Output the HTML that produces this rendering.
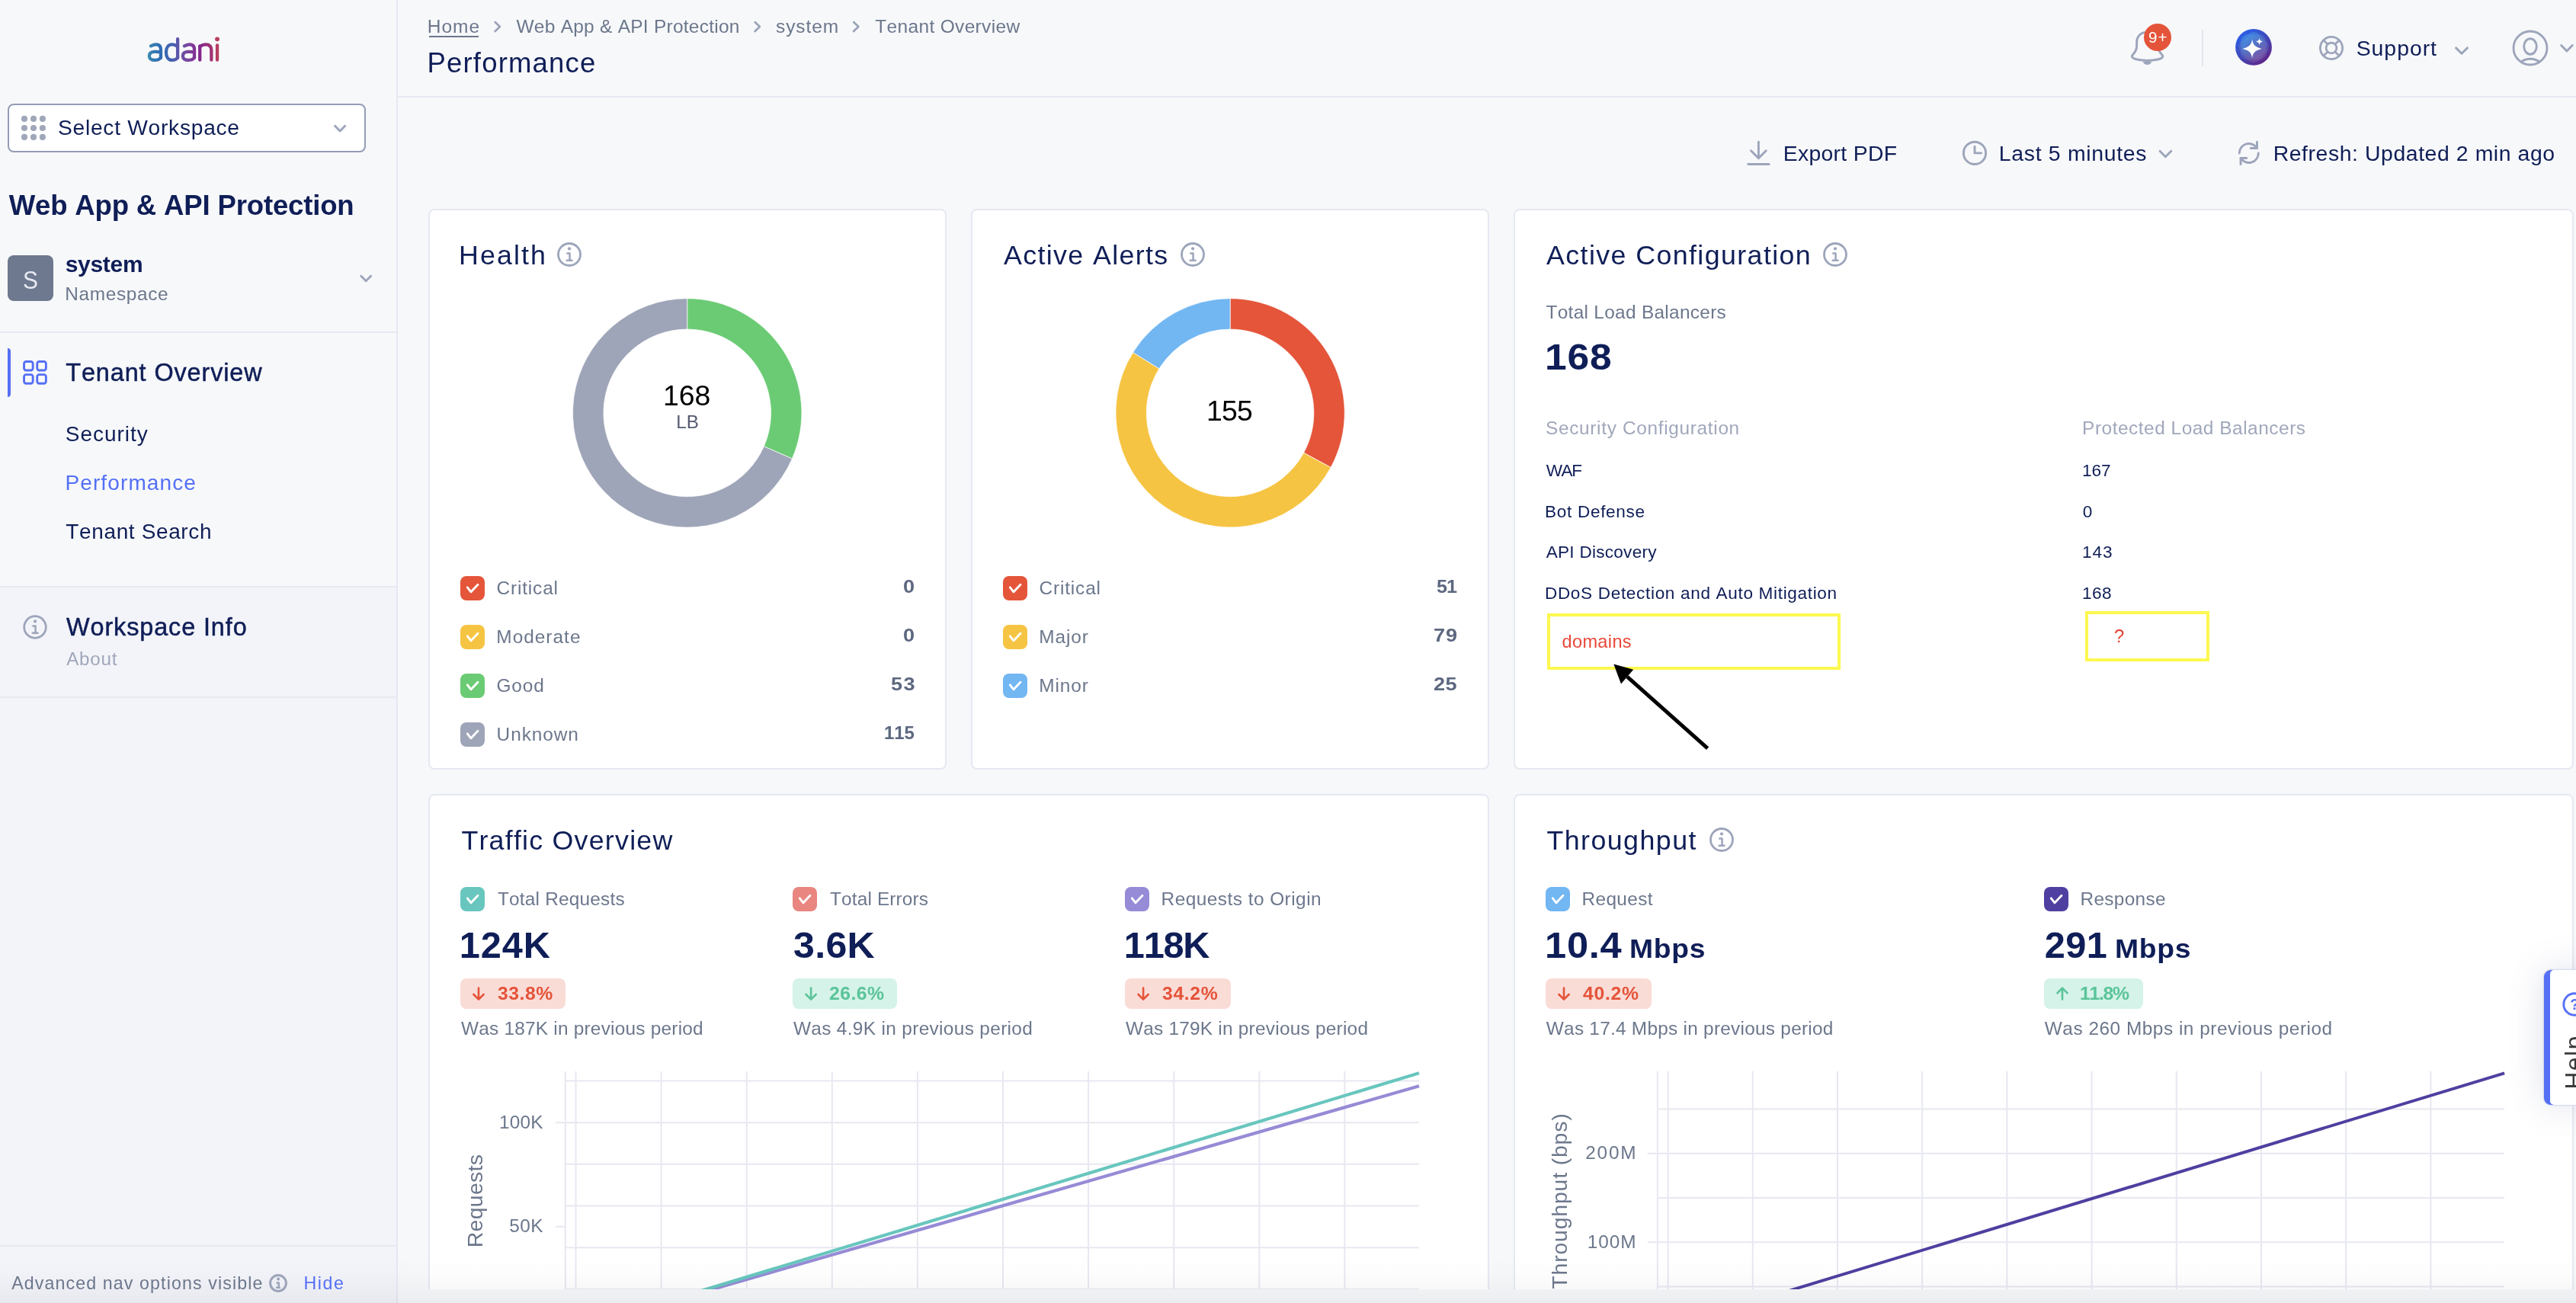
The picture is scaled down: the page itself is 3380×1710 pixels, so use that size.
<!DOCTYPE html>
<html><head><meta charset="utf-8"><title>Performance</title>
<style>
html,body{margin:0;padding:0;}
body{width:3380px;height:1710px;overflow:hidden;background:#f7f8fa;position:relative;font-family:"Liberation Sans",sans-serif;}
.t{position:absolute;white-space:nowrap;line-height:1;display:block;font-kerning:none;}
.abs{position:absolute;}
.card{position:absolute;background:#fff;border:2px solid #e6e8f2;border-radius:8px;box-sizing:border-box;}
svg{position:absolute;overflow:visible;}
.cb{position:absolute;width:32px;height:32px;border-radius:8px;}
.badge{position:absolute;height:40px;border-radius:8px;}
</style></head><body><div id="root" style="position:absolute;left:0;top:0;width:3380px;height:1710px;will-change:transform;overflow:hidden">
<div class="abs" style="left:0;top:770px;width:520px;height:940px;background:#f3f4f9"></div>
<div class="abs" style="left:520px;top:0;width:2px;height:1710px;background:#e6e8f2"></div>
<div class="abs" style="left:0;top:435px;width:520px;height:2px;background:#e6e8f2"></div>
<div class="abs" style="left:0;top:769px;width:520px;height:2px;background:#e6e8f2"></div>
<div class="abs" style="left:0;top:914px;width:520px;height:2px;background:#e6e8f2"></div>
<div class="abs" style="left:0;top:1634px;width:520px;height:2px;background:#e6e8f2"></div>
<svg style="left:180px;top:40px" width="120" height="50" viewBox="0 0 2576 1073">
<defs><linearGradient id="lg" gradientUnits="userSpaceOnUse" x1="300" y1="0" x2="2300" y2="0"><stop offset="0" stop-color="#3a8aae"/><stop offset="0.17" stop-color="#2f6cb5"/><stop offset="0.36" stop-color="#4a60b0"/><stop offset="0.43" stop-color="#5e55a8"/><stop offset="0.58" stop-color="#7c429e"/><stop offset="0.73" stop-color="#84268e"/><stop offset="0.89" stop-color="#a03372"/><stop offset="1" stop-color="#bb405a"/></linearGradient></defs>
<g fill="none" stroke="url(#lg)" stroke-width="92" stroke-linecap="round" stroke-linejoin="round">
<path d="M385 437 C430 415 480 395 530 395 C620 395 665 450 665 540 L665 770"/>
<path d="M665 608 C600 600 540 598 480 600 C390 605 340 650 340 718 C340 790 400 835 490 835 C570 835 640 810 665 760"/>
<path d="M1140 237 L1140 770"/>
<path d="M1140 455 C1090 415 1040 395 980 395 C880 395 815 480 815 615 C815 750 880 835 980 835 C1060 835 1120 805 1140 760"/>
<path d="M1330 437 C1375 415 1425 395 1475 395 C1565 395 1610 450 1610 540 L1610 770"/>
<path d="M1610 608 C1545 600 1485 598 1425 600 C1335 605 1285 650 1285 718 C1285 790 1345 835 1435 835 C1515 835 1585 810 1610 760"/>
<path d="M1765 440 L1765 830"/>
<path d="M1765 455 C1820 415 1870 395 1930 395 C2040 395 2090 450 2090 560 L2090 830"/>
<path d="M2255 415 L2255 830"/>
</g><circle cx="2255" cy="243" r="63" fill="#b8405c"/></svg>
<div class="abs" style="left:10px;top:136px;width:470px;height:64px;box-sizing:border-box;border:2px solid #949cb4;border-radius:8px;background:#fff"></div>
<svg style="left:0;top:0" width="1" height="1"><circle cx="32" cy="155.9" r="4.05" fill="#a0a7bb"/><circle cx="32" cy="168" r="4.05" fill="#a0a7bb"/><circle cx="32" cy="179.9" r="4.05" fill="#a0a7bb"/><circle cx="44" cy="155.9" r="4.05" fill="#a0a7bb"/><circle cx="44" cy="168" r="4.05" fill="#a0a7bb"/><circle cx="44" cy="179.9" r="4.05" fill="#a0a7bb"/><circle cx="55.9" cy="155.9" r="4.05" fill="#a0a7bb"/><circle cx="55.9" cy="168" r="4.05" fill="#a0a7bb"/><circle cx="55.9" cy="179.9" r="4.05" fill="#a0a7bb"/></svg>
<span class="t" style="left:76.02px;top:153.00px;font-size:28.2px;color:#0f1e57;letter-spacing:0.725px;">Select Workspace</span>
<svg style="left:0;top:0" width="1" height="1"><path d="M439.5 165.2 L446.1 172 L452.7 165.2" fill="none" stroke="#9da5bb" stroke-width="2.9" stroke-linecap="round" stroke-linejoin="round"/></svg>
<span class="t" style="left:11.66px;top:252.00px;font-size:36.6px;color:#0f1e57;letter-spacing:-0.182px;font-weight:700;">Web App &amp; API Protection</span>
<div class="abs" style="left:10px;top:335px;width:60px;height:60px;border-radius:8px;background:#6e788f"></div>
<span class="t" style="left:29.76px;top:350.00px;font-size:34px;color:#e8eaf2;transform:scaleX(0.88);transform-origin:0 0;">S</span>
<span class="t" style="left:85.75px;top:332.00px;font-size:30px;color:#0f1e57;letter-spacing:-0.318px;font-weight:700;">system</span>
<span class="t" style="left:85.20px;top:374.00px;font-size:24.4px;color:#6c778c;letter-spacing:0.661px;">Namespace</span>
<svg style="left:0;top:0" width="1" height="1"><path d="M473.8 362.3 L480.20000000000005 368.8 L486.6 362.3" fill="none" stroke="#9da5bb" stroke-width="2.9" stroke-linecap="round" stroke-linejoin="round"/></svg>
<div class="abs" style="left:10px;top:457px;width:4.3px;height:64px;border-radius:0 4px 4px 0;background:#5570f5"></div>
<svg style="left:0;top:0" width="1" height="1"><rect x="31.55" y="474.45" width="11.6" height="11.6" rx="2.7" fill="none" stroke="#5570f5" stroke-width="2.9"/><rect x="48.75" y="474.45" width="11.6" height="11.6" rx="2.7" fill="none" stroke="#5570f5" stroke-width="2.9"/><rect x="31.55" y="491.65" width="11.6" height="11.6" rx="2.7" fill="none" stroke="#5570f5" stroke-width="2.9"/><rect x="48.75" y="491.65" width="11.6" height="11.6" rx="2.7" fill="none" stroke="#5570f5" stroke-width="2.9"/></svg>
<span class="t" style="left:86.27px;top:473.00px;font-size:32.4px;color:#0f1e57;letter-spacing:0.896px;-webkit-text-stroke:0.5px #0f1e57;">Tenant Overview</span>
<span class="t" style="left:85.73px;top:556.00px;font-size:28px;color:#0f1e57;letter-spacing:0.997px;">Security</span>
<span class="t" style="left:85.40px;top:620.00px;font-size:28px;color:#5570f5;letter-spacing:1.125px;">Performance</span>
<span class="t" style="left:86.37px;top:684.00px;font-size:28px;color:#0f1e57;letter-spacing:0.623px;">Tenant Search</span>
<svg style="left:26px;top:803px" width="40" height="40" viewBox="-20 -20 40 40"><circle cx="0" cy="0" r="14.30" fill="none" stroke="#9da5bb" stroke-width="2.8"/><circle cx="0.05" cy="-7.60" r="2.07" fill="#9da5bb"/><path d="M-2.67 -1.48 H0.54 V7.70 M-3.26 7.70 H3.55" fill="none" stroke="#9da5bb" stroke-width="2.47" stroke-linecap="round" stroke-linejoin="round"/></svg>
<span class="t" style="left:87.06px;top:807.00px;font-size:32.4px;color:#0f1e57;letter-spacing:0.893px;-webkit-text-stroke:0.5px #0f1e57;">Workspace Info</span>
<span class="t" style="left:87.15px;top:853.00px;font-size:24.2px;color:#a0a7bb;letter-spacing:0.796px;">About</span>
<div class="abs" style="left:522px;top:126px;width:2858px;height:2px;background:#e6e8f2"></div>
<span class="t" style="left:560.79px;top:23.00px;font-size:24.5px;color:#6c778c;letter-spacing:0.982px;">Home</span>
<div class="abs" style="left:562.5px;top:47.3px;width:65.8px;height:1.9px;background:#6c778c"></div>
<svg style="left:0;top:0" width="1" height="1"><path d="M649.6 29.1 L655.9 35.05 L649.6 41" fill="none" stroke="#9aa3b8" stroke-width="2.7" stroke-linecap="round" stroke-linejoin="round"/></svg>
<span class="t" style="left:677.49px;top:23.00px;font-size:24.5px;color:#6c778c;letter-spacing:0.242px;">Web App &amp; API Protection</span>
<svg style="left:0;top:0" width="1" height="1"><path d="M990.6 29.1 L996.9 35.05 L990.6 41" fill="none" stroke="#9aa3b8" stroke-width="2.7" stroke-linecap="round" stroke-linejoin="round"/></svg>
<span class="t" style="left:1018.02px;top:23.00px;font-size:24.5px;color:#6c778c;letter-spacing:0.921px;">system</span>
<svg style="left:0;top:0" width="1" height="1"><path d="M1120.1 29.1 L1126.3999999999999 35.05 L1120.1 41" fill="none" stroke="#9aa3b8" stroke-width="2.7" stroke-linecap="round" stroke-linejoin="round"/></svg>
<span class="t" style="left:1148.25px;top:23.00px;font-size:24.5px;color:#6c778c;letter-spacing:0.336px;">Tenant Overview</span>
<span class="t" style="left:560.51px;top:65.00px;font-size:36.5px;color:#0f1e57;letter-spacing:1.187px;">Performance</span>
<svg style="left:2780px;top:20px" width="120" height="80" viewBox="0 0 1955 1303">
<path d="M612 362 C470 362 385 450 385 580 L385 660 C385 760 340 800 295 850 C265 890 300 925 370 940 C520 975 700 975 855 940 C925 925 960 890 930 850 C885 800 840 760 840 660 L840 580 C840 450 755 362 612 362 Z" fill="none" stroke="#9da5bb" stroke-width="48" stroke-linejoin="round"/>
<path d="M515 992 C540 1040 575 1058 612 1058 C650 1058 685 1040 705 992 Z" fill="#9da5bb"/>
</svg>
<div class="abs" style="left:2812.9px;top:30.8px;width:36.2px;height:36.2px;border-radius:19px;background:#e4543a"></div>
<span class="t" style="left:2818.93px;top:39.00px;font-size:20.6px;color:#fff;letter-spacing:1.195px;">9+</span>
<div class="abs" style="left:2889px;top:39px;width:2px;height:48px;background:#e3e5f2"></div>
<svg style="left:2932px;top:37px" width="50" height="50" viewBox="-25 -25 50 50">
<defs><linearGradient id="ag" x1="0.15" y1="0.1" x2="0.8" y2="0.95"><stop offset="0" stop-color="#2b60ea"/><stop offset="0.5" stop-color="#4148b8"/><stop offset="1" stop-color="#5f2488"/></linearGradient>
<linearGradient id="ag2" x1="0.1" y1="0.1" x2="0.9" y2="0.9"><stop offset="0" stop-color="#45a0e8" stop-opacity="0.85"/><stop offset="0.5" stop-color="#6080c8" stop-opacity="0.6"/><stop offset="1" stop-color="#9060a8" stop-opacity="0.7"/></linearGradient></defs>
<circle cx="0" cy="-0.1" r="23.9" fill="url(#ag)"/><rect x="-17" y="-17" width="34" height="34" rx="10" fill="url(#ag2)" opacity="0.55"/><rect x="-17" y="-17" width="34" height="34" rx="10" fill="url(#ag2)" opacity="0.55" transform="rotate(45)"/><circle r="15.5" fill="url(#ag2)" opacity="0.5"/>
<path d="M-1.9 -10.7 C-1.1 -3.5 1.6 -0.3 10.7 1.9 C1.6 4.1 -1.1 7.3 -1.9 14.5 C-2.7 7.3 -5.4 4.1 -14.5 1.9 C-5.4 -0.3 -2.7 -3.5 -1.9 -10.7 Z" fill="#fff"/>
<path d="M7.6 -12.6 C7.9 -9.6 8.9 -8.3 12.5 -7.6 C8.9 -6.9 7.9 -5.6 7.6 -2.6 C7.3 -5.6 6.3 -6.9 2.7 -7.6 C6.3 -8.3 7.3 -9.6 7.6 -12.6 Z" fill="#fff"/>
</svg>
<svg style="left:3039.4px;top:42.97px" width="40" height="40" viewBox="-20 -20 40 40">
<circle r="14.6" fill="none" stroke="#9da5bb" stroke-width="2.8"/><circle r="6.9" fill="none" stroke="#9da5bb" stroke-width="2.8"/>
<path d="M-10.3 -10.3 L-4.9 -4.9 M10.3 -10.3 L4.9 -4.9 M-10.3 10.3 L-4.9 4.9 M10.3 10.3 L4.9 4.9" stroke="#9da5bb" stroke-width="2.8"/></svg>
<span class="t" style="left:3091.71px;top:49.00px;font-size:28.4px;color:#0f1e57;letter-spacing:0.971px;">Support</span>
<svg style="left:0;top:0" width="1" height="1"><path d="M3222.5 62.9 L3230.0 70.3 L3237.5 62.9" fill="none" stroke="#9da5bb" stroke-width="2.9" stroke-linecap="round" stroke-linejoin="round"/></svg>
<svg style="left:3294.95px;top:38px" width="50" height="50" viewBox="-25 -25 50 50">
<defs><clipPath id="uc"><circle r="22"/></clipPath></defs>
<circle r="22" fill="none" stroke="#9da5bb" stroke-width="2.9"/>
<ellipse cx="0" cy="-2" rx="8.3" ry="10.2" fill="none" stroke="#9da5bb" stroke-width="2.9"/>
<path d="M-14 19.2 Q0 9.4 14 19.2" fill="none" stroke="#9da5bb" stroke-width="2.9" clip-path="url(#uc)"/></svg>
<svg style="left:0;top:0" width="1" height="1"><path d="M3360.6 59.5 L3367.95 66.9 L3375.3 59.5" fill="none" stroke="#9da5bb" stroke-width="2.9" stroke-linecap="round" stroke-linejoin="round"/></svg>
<svg style="left:0;top:0" width="1" height="1"><path d="M2307.4 186.3 V207.3 M2297.5 197.8 L2307.4 207.6 L2317.3 197.8 M2293.8 215.5 H2321.2" fill="none" stroke="#9da5bb" stroke-width="2.9" stroke-linecap="round" stroke-linejoin="round"/></svg>
<span class="t" style="left:2339.67px;top:187.00px;font-size:28.4px;color:#0f1e57;letter-spacing:0.300px;">Export PDF</span>
<svg style="left:0;top:0" width="1" height="1"><circle cx="2591" cy="200.9" r="14.6" fill="none" stroke="#9da5bb" stroke-width="2.9"/><path d="M2591 192.4 V200.9 H2599.6" fill="none" stroke="#9da5bb" stroke-width="2.9" stroke-linecap="round" stroke-linejoin="round"/></svg>
<span class="t" style="left:2622.87px;top:187.00px;font-size:28.4px;color:#0f1e57;letter-spacing:0.689px;">Last 5 minutes</span>
<svg style="left:0;top:0" width="1" height="1"><path d="M2834 198.3 L2841.4 205.8 L2848.8 198.3" fill="none" stroke="#9da5bb" stroke-width="2.9" stroke-linecap="round" stroke-linejoin="round"/></svg>
<svg style="left:2910px;top:170px" width="120" height="60" viewBox="0 0 2576 1288">
<g fill="none" stroke="#9da5bb" stroke-width="62" stroke-linecap="round" stroke-linejoin="round">
<path d="M605 665 A270 270 0 0 1 1105 525"/><path d="M1105 350 V525 H930"/>
<path d="M1145 665 A270 270 0 0 1 645 805"/><path d="M645 980 V805 H810"/></g></svg>
<span class="t" style="left:2982.67px;top:187.00px;font-size:28.4px;color:#0f1e57;letter-spacing:0.573px;">Refresh: Updated 2 min ago</span>
<div class="card" style="left:562px;top:274px;width:680px;height:736px"></div>
<div class="card" style="left:1274px;top:274px;width:680px;height:736px"></div>
<div class="card" style="left:1986px;top:274px;width:1391px;height:736px"></div>
<div class="card" style="left:562px;top:1042px;width:1392px;height:700px"></div>
<div class="card" style="left:1986px;top:1042px;width:1391px;height:700px"></div>
<span class="t" style="left:602.06px;top:318.00px;font-size:35.8px;color:#0f1e57;letter-spacing:2.075px;">Health</span>
<svg style="left:727.1px;top:313.8px" width="40" height="40" viewBox="-20 -20 40 40"><circle cx="0" cy="0" r="14.50" fill="none" stroke="#9da5bb" stroke-width="2.8"/><circle cx="0.05" cy="-7.70" r="2.10" fill="#9da5bb"/><path d="M-2.70 -1.50 H0.55 V7.80 M-3.30 7.80 H3.60" fill="none" stroke="#9da5bb" stroke-width="2.50" stroke-linecap="round" stroke-linejoin="round"/></svg>
<svg style="left:0;top:0" width="1" height="1"><path d="M901.70 391.70 A150.2 150.2 0 0 1 1039.37 601.96 L1002.34 585.81 A109.8 109.8 0 0 0 901.70 432.10 Z" fill="#6bcb74" stroke="#fff" stroke-width="0.7"/><path d="M1039.37 601.96 A150.2 150.2 0 1 1 901.70 391.70 L901.70 432.10 A109.8 109.8 0 1 0 1002.34 585.81 Z" fill="#9fa5b8" stroke="#fff" stroke-width="0.7"/></svg>
<span class="t" style="left:870.05px;top:501.00px;font-size:37.4px;color:#000;letter-spacing:-0.013px;">168</span>
<span class="t" style="left:887.21px;top:542.00px;font-size:24.2px;color:#555b70;letter-spacing:0.061px;">LB</span>
<div class="cb" style="left:604px;top:756px;background:#e4553a"><svg style="left:0;top:0" width="32" height="32" viewBox="0 0 32 32"><path d="M9.3 14.9 L14 20.8 L23 11.2" fill="none" stroke="#fff" stroke-width="2.9" stroke-linecap="round" stroke-linejoin="round"/></svg></div>
<span class="t" style="left:651.56px;top:760.00px;font-size:24.4px;color:#6c778c;letter-spacing:0.845px;">Critical</span>
<span class="t" style="left:1185.33px;top:758.00px;font-size:24px;color:#5d6880;font-weight:700;transform:scaleX(1.13);transform-origin:0 0;">0</span>
<div class="cb" style="left:604px;top:820px;background:#f6c443"><svg style="left:0;top:0" width="32" height="32" viewBox="0 0 32 32"><path d="M9.3 14.9 L14 20.8 L23 11.2" fill="none" stroke="#fff" stroke-width="2.9" stroke-linecap="round" stroke-linejoin="round"/></svg></div>
<span class="t" style="left:651.30px;top:824.00px;font-size:24.4px;color:#6c778c;letter-spacing:1.015px;">Moderate</span>
<span class="t" style="left:1185.33px;top:822.00px;font-size:24px;color:#5d6880;font-weight:700;transform:scaleX(1.13);transform-origin:0 0;">0</span>
<div class="cb" style="left:604px;top:884px;background:#6bcb74"><svg style="left:0;top:0" width="32" height="32" viewBox="0 0 32 32"><path d="M9.3 14.9 L14 20.8 L23 11.2" fill="none" stroke="#fff" stroke-width="2.9" stroke-linecap="round" stroke-linejoin="round"/></svg></div>
<span class="t" style="left:651.57px;top:888.00px;font-size:24.4px;color:#6c778c;letter-spacing:0.837px;">Good</span>
<span class="t" style="left:1168.77px;top:886.00px;font-size:24px;color:#5d6880;letter-spacing:1.193px;font-weight:700;transform:scaleX(1.13);transform-origin:0 0;">53</span>
<div class="cb" style="left:604px;top:948px;background:#9fa5b8"><svg style="left:0;top:0" width="32" height="32" viewBox="0 0 32 32"><path d="M9.3 14.9 L14 20.8 L23 11.2" fill="none" stroke="#fff" stroke-width="2.9" stroke-linecap="round" stroke-linejoin="round"/></svg></div>
<span class="t" style="left:651.62px;top:952.00px;font-size:24.4px;color:#6c778c;letter-spacing:0.924px;">Unknown</span>
<span class="t" style="left:1159.89px;top:950.00px;font-size:24px;color:#5d6880;letter-spacing:0.018px;font-weight:700;">115</span>
<span class="t" style="left:1317.03px;top:318.00px;font-size:35.8px;color:#0f1e57;letter-spacing:1.352px;">Active Alerts</span>
<svg style="left:1544.6px;top:314px" width="40" height="40" viewBox="-20 -20 40 40"><circle cx="0" cy="0" r="14.50" fill="none" stroke="#9da5bb" stroke-width="2.8"/><circle cx="0.05" cy="-7.70" r="2.10" fill="#9da5bb"/><path d="M-2.70 -1.50 H0.55 V7.80 M-3.30 7.80 H3.60" fill="none" stroke="#9da5bb" stroke-width="2.50" stroke-linecap="round" stroke-linejoin="round"/></svg>
<svg style="left:0;top:0" width="1" height="1"><path d="M1614.10 391.70 A150.2 150.2 0 0 1 1746.16 613.46 L1710.64 594.21 A109.8 109.8 0 0 0 1614.10 432.10 Z" fill="#e4553a" stroke="#fff" stroke-width="0.7"/><path d="M1746.16 613.46 A150.2 150.2 0 1 1 1486.63 462.45 L1520.92 483.82 A109.8 109.8 0 1 0 1710.64 594.21 Z" fill="#f6c443" stroke="#fff" stroke-width="0.7"/><path d="M1486.63 462.45 A150.2 150.2 0 0 1 1614.10 391.70 L1614.10 432.10 A109.8 109.8 0 0 0 1520.92 483.82 Z" fill="#72b6f2" stroke="#fff" stroke-width="0.7"/></svg>
<span class="t" style="left:1582.95px;top:521.00px;font-size:37.4px;color:#000;letter-spacing:-0.790px;">155</span>
<div class="cb" style="left:1316px;top:756px;background:#e4553a"><svg style="left:0;top:0" width="32" height="32" viewBox="0 0 32 32"><path d="M9.3 14.9 L14 20.8 L23 11.2" fill="none" stroke="#fff" stroke-width="2.9" stroke-linecap="round" stroke-linejoin="round"/></svg></div>
<span class="t" style="left:1363.56px;top:760.00px;font-size:24.4px;color:#6c778c;letter-spacing:0.845px;">Critical</span>
<span class="t" style="left:1884.92px;top:758.00px;font-size:24px;color:#5d6880;letter-spacing:-0.908px;font-weight:700;transform:scaleX(1.05);transform-origin:0 0;">51</span>
<div class="cb" style="left:1316px;top:820px;background:#f6c443"><svg style="left:0;top:0" width="32" height="32" viewBox="0 0 32 32"><path d="M9.3 14.9 L14 20.8 L23 11.2" fill="none" stroke="#fff" stroke-width="2.9" stroke-linecap="round" stroke-linejoin="round"/></svg></div>
<span class="t" style="left:1363.30px;top:824.00px;font-size:24.4px;color:#6c778c;letter-spacing:0.899px;">Major</span>
<span class="t" style="left:1881.13px;top:822.00px;font-size:24px;color:#5d6880;letter-spacing:0.890px;font-weight:700;transform:scaleX(1.13);transform-origin:0 0;">79</span>
<div class="cb" style="left:1316px;top:884px;background:#72b6f2"><svg style="left:0;top:0" width="32" height="32" viewBox="0 0 32 32"><path d="M9.3 14.9 L14 20.8 L23 11.2" fill="none" stroke="#fff" stroke-width="2.9" stroke-linecap="round" stroke-linejoin="round"/></svg></div>
<span class="t" style="left:1363.30px;top:888.00px;font-size:24.4px;color:#6c778c;letter-spacing:0.899px;">Minor</span>
<span class="t" style="left:1881.36px;top:886.00px;font-size:24px;color:#5d6880;letter-spacing:0.468px;font-weight:700;transform:scaleX(1.13);transform-origin:0 0;">25</span>
<span class="t" style="left:2029.03px;top:318.00px;font-size:35.8px;color:#0f1e57;letter-spacing:1.390px;">Active Configuration</span>
<svg style="left:2387.6px;top:313.9px" width="40" height="40" viewBox="-20 -20 40 40"><circle cx="0" cy="0" r="14.50" fill="none" stroke="#9da5bb" stroke-width="2.8"/><circle cx="0.05" cy="-7.70" r="2.10" fill="#9da5bb"/><path d="M-2.70 -1.50 H0.55 V7.80 M-3.30 7.80 H3.60" fill="none" stroke="#9da5bb" stroke-width="2.50" stroke-linecap="round" stroke-linejoin="round"/></svg>
<span class="t" style="left:2028.55px;top:398.00px;font-size:24.4px;color:#6c778c;letter-spacing:0.302px;">Total Load Balancers</span>
<span class="t" style="left:2026.95px;top:444.00px;font-size:48.7px;color:#0f1e57;letter-spacing:0.712px;font-weight:700;transform:scaleX(1.06);transform-origin:0 0;">168</span>
<span class="t" style="left:2027.99px;top:550.00px;font-size:24.4px;color:#a0a7bb;letter-spacing:0.678px;">Security Configuration</span>
<span class="t" style="left:2732.10px;top:550.00px;font-size:24.4px;color:#a0a7bb;letter-spacing:0.531px;">Protected Load Balancers</span>
<span class="t" style="left:2028.70px;top:607.00px;font-size:22.6px;color:#0f1e57;letter-spacing:-1.403px;">WAF</span>
<span class="t" style="left:2731.88px;top:607.00px;font-size:22.6px;color:#0f1e57;letter-spacing:0.025px;">167</span>
<span class="t" style="left:2026.95px;top:661.00px;font-size:22.6px;color:#0f1e57;letter-spacing:0.688px;">Bot Defense</span>
<span class="t" style="left:2732.72px;top:661.00px;font-size:22.6px;color:#0f1e57;">0</span>
<span class="t" style="left:2028.76px;top:714.00px;font-size:22.6px;color:#0f1e57;letter-spacing:0.240px;">API Discovery</span>
<span class="t" style="left:2731.88px;top:714.00px;font-size:22.6px;color:#0f1e57;letter-spacing:1.004px;">143</span>
<span class="t" style="left:2026.95px;top:768.00px;font-size:22.6px;color:#0f1e57;letter-spacing:0.652px;">DDoS Detection and Auto Mitigation</span>
<span class="t" style="left:2731.88px;top:768.00px;font-size:22.6px;color:#0f1e57;letter-spacing:0.448px;">168</span>
<div class="abs" style="left:2030.2px;top:805px;width:384.6px;height:73.8px;box-sizing:border-box;border:4.9px solid #fdf74f;background:#fff"></div>
<span class="t" style="left:2049.51px;top:831.00px;font-size:23.6px;color:#e8483a;letter-spacing:0.323px;">domains</span>
<div class="abs" style="left:2736.1px;top:802.1px;width:162.8px;height:65.8px;box-sizing:border-box;border:4.9px solid #fdf74f;background:#fff"></div>
<span class="t" style="left:2773.92px;top:823.00px;font-size:23.8px;color:#e5402f;">?</span>
<svg style="left:0;top:0" width="1" height="1"><path d="M2240.6 982.2 L2135.1 888.2" stroke="#000" stroke-width="4.9" stroke-linecap="butt"/><path d="M2117.3 871.6 L2143.2 878.8 L2127 897.6 Z" fill="#000"/></svg>
<span class="t" style="left:605.40px;top:1086.00px;font-size:35.8px;color:#0f1e57;letter-spacing:1.222px;">Traffic Overview</span>
<div class="cb" style="left:604px;top:1164px;background:#68c6be"><svg style="left:0;top:0" width="32" height="32" viewBox="0 0 32 32"><path d="M9.3 14.9 L14 20.8 L23 11.2" fill="none" stroke="#fff" stroke-width="2.9" stroke-linecap="round" stroke-linejoin="round"/></svg></div>
<span class="t" style="left:652.95px;top:1168.00px;font-size:24.4px;color:#6c778c;letter-spacing:0.202px;">Total Requests</span>
<span class="t" style="left:602.63px;top:1216.00px;font-size:48.7px;color:#0f1e57;letter-spacing:0.999px;font-weight:700;">124K</span>
<div class="badge" style="left:604px;top:1284px;width:138px;background:#fadcd7"></div>
<svg style="left:0;top:0" width="1" height="1"><path d="M628 1296.6 V1311.4 M621.4 1305 L628 1311.7 L634.6 1305" fill="none" stroke="#e4543a" stroke-width="2.6" stroke-linecap="round" stroke-linejoin="round"/></svg>
<span class="t" style="left:652.63px;top:1293.00px;font-size:23.6px;color:#e4543a;letter-spacing:0.467px;font-weight:700;transform:scaleX(1.05);transform-origin:0 0;">33.8%</span>
<span class="t" style="left:604.99px;top:1338.00px;font-size:24.4px;color:#6c778c;letter-spacing:0.224px;">Was 187K in previous period</span>
<div class="cb" style="left:1040.1px;top:1164px;background:#e98680"><svg style="left:0;top:0" width="32" height="32" viewBox="0 0 32 32"><path d="M9.3 14.9 L14 20.8 L23 11.2" fill="none" stroke="#fff" stroke-width="2.9" stroke-linecap="round" stroke-linejoin="round"/></svg></div>
<span class="t" style="left:1089.05px;top:1168.00px;font-size:24.4px;color:#6c778c;letter-spacing:0.144px;">Total Errors</span>
<span class="t" style="left:1041.05px;top:1216.00px;font-size:48.7px;color:#0f1e57;letter-spacing:0.279px;font-weight:700;transform:scaleX(1.03);transform-origin:0 0;">3.6K</span>
<div class="badge" style="left:1040.1px;top:1284px;width:136.8px;background:#d5f3e8"></div>
<svg style="left:0;top:0" width="1" height="1"><path d="M1064.1 1296.6 V1311.4 M1057.5 1305 L1064.1 1311.7 L1070.6999999999998 1305" fill="none" stroke="#5bc49a" stroke-width="2.6" stroke-linecap="round" stroke-linejoin="round"/></svg>
<span class="t" style="left:1088.14px;top:1293.00px;font-size:23.6px;color:#5bc49a;letter-spacing:0.440px;font-weight:700;transform:scaleX(1.05);transform-origin:0 0;">26.6%</span>
<span class="t" style="left:1040.89px;top:1338.00px;font-size:24.4px;color:#6c778c;letter-spacing:0.343px;">Was 4.9K in previous period</span>
<div class="cb" style="left:1476.1px;top:1164px;background:#968bd6"><svg style="left:0;top:0" width="32" height="32" viewBox="0 0 32 32"><path d="M9.3 14.9 L14 20.8 L23 11.2" fill="none" stroke="#fff" stroke-width="2.9" stroke-linecap="round" stroke-linejoin="round"/></svg></div>
<span class="t" style="left:1523.60px;top:1168.00px;font-size:24.4px;color:#6c778c;letter-spacing:0.471px;">Requests to Origin</span>
<span class="t" style="left:1474.83px;top:1216.00px;font-size:48.7px;color:#0f1e57;letter-spacing:-1.268px;font-weight:700;">118K</span>
<div class="badge" style="left:1476.1px;top:1284px;width:138.7px;background:#fadcd7"></div>
<svg style="left:0;top:0" width="1" height="1"><path d="M1500.1 1296.6 V1311.4 M1493.5 1305 L1500.1 1311.7 L1506.6999999999998 1305" fill="none" stroke="#e4543a" stroke-width="2.6" stroke-linecap="round" stroke-linejoin="round"/></svg>
<span class="t" style="left:1524.93px;top:1293.00px;font-size:23.6px;color:#e4543a;letter-spacing:0.586px;font-weight:700;transform:scaleX(1.05);transform-origin:0 0;">34.2%</span>
<span class="t" style="left:1476.89px;top:1338.00px;font-size:24.4px;color:#6c778c;letter-spacing:0.240px;">Was 179K in previous period</span>
<svg style="left:0;top:0" width="1" height="1"><path d="M741.8 1406 V1700" stroke="#e7e8f1" stroke-width="2"/><path d="M755.5 1406 V1700" stroke="#e7e8f1" stroke-width="2"/><path d="M867.6 1406 V1700" stroke="#e7e8f1" stroke-width="2"/><path d="M979.7 1406 V1700" stroke="#e7e8f1" stroke-width="2"/><path d="M1091.8 1406 V1700" stroke="#e7e8f1" stroke-width="2"/><path d="M1203.9 1406 V1700" stroke="#e7e8f1" stroke-width="2"/><path d="M1316.0 1406 V1700" stroke="#e7e8f1" stroke-width="2"/><path d="M1428.1 1406 V1700" stroke="#e7e8f1" stroke-width="2"/><path d="M1540.2 1406 V1700" stroke="#e7e8f1" stroke-width="2"/><path d="M1652.3 1406 V1700" stroke="#e7e8f1" stroke-width="2"/><path d="M1764.4 1406 V1700" stroke="#e7e8f1" stroke-width="2"/><path d="M742 1418.5 H1862" stroke="#e7e8f1" stroke-width="2"/><path d="M742 1473.2 H1862" stroke="#e7e8f1" stroke-width="2"/><path d="M742 1527.8 H1862" stroke="#e7e8f1" stroke-width="2"/><path d="M742 1582.5 H1862" stroke="#e7e8f1" stroke-width="2"/><path d="M742 1637.2 H1862" stroke="#e7e8f1" stroke-width="2"/><path d="M742 1692 H1862" stroke="#e7e8f1" stroke-width="2"/><path d="M729 1473.2 H742 M729 1609.8 H742" stroke="#e7e8f1" stroke-width="2"/><path d="M742 1747.5 L1862 1425.2" stroke="#968bd6" stroke-width="4.2" fill="none"/><path d="M742 1748 L1862 1408.2" stroke="#68c6be" stroke-width="4.2" fill="none"/></svg>
<span class="t" style="left:655.04px;top:1461.00px;font-size:24.4px;color:#6c778c;letter-spacing:0.149px;">100K</span>
<span class="t" style="left:668.22px;top:1597.00px;font-size:24.4px;color:#6c778c;letter-spacing:0.418px;">50K</span>
<div class="abs" style="left:632.8px;top:1635px;width:0;height:0;transform:rotate(-90deg)"><span class="t" style="left:-2.33px;top:-24.04px;font-size:28.4px;color:#6c778c;letter-spacing:0.340px;">Requests</span></div>
<span class="t" style="left:2029.40px;top:1086.00px;font-size:35.8px;color:#0f1e57;letter-spacing:1.440px;">Throughput</span>
<svg style="left:2238.9px;top:1081.8px" width="40" height="40" viewBox="-20 -20 40 40"><circle cx="0" cy="0" r="14.50" fill="none" stroke="#9da5bb" stroke-width="2.8"/><circle cx="0.05" cy="-7.70" r="2.10" fill="#9da5bb"/><path d="M-2.70 -1.50 H0.55 V7.80 M-3.30 7.80 H3.60" fill="none" stroke="#9da5bb" stroke-width="2.50" stroke-linecap="round" stroke-linejoin="round"/></svg>
<div class="cb" style="left:2028px;top:1164px;background:#72b6f2"><svg style="left:0;top:0" width="32" height="32" viewBox="0 0 32 32"><path d="M9.3 14.9 L14 20.8 L23 11.2" fill="none" stroke="#fff" stroke-width="2.9" stroke-linecap="round" stroke-linejoin="round"/></svg></div>
<span class="t" style="left:2075.50px;top:1168.00px;font-size:24.4px;color:#6c778c;letter-spacing:0.367px;">Request</span>
<span class="t" style="left:2027.21px;top:1216.00px;font-size:48.7px;color:#0f1e57;letter-spacing:0.701px;font-weight:700;transform:scaleX(1.04);transform-origin:0 0;">10.4</span>
<span class="t" style="left:2137.80px;top:1227.00px;font-size:35.2px;color:#0f1e57;letter-spacing:0.632px;font-weight:700;transform:scaleX(1.06);transform-origin:0 0;">Mbps</span>
<div class="badge" style="left:2028px;top:1284px;width:139.2px;background:#fadcd7"></div>
<svg style="left:0;top:0" width="1" height="1"><path d="M2052 1296.6 V1311.4 M2045.4 1305 L2052 1311.7 L2058.6 1305" fill="none" stroke="#e4543a" stroke-width="2.6" stroke-linecap="round" stroke-linejoin="round"/></svg>
<span class="t" style="left:2076.62px;top:1293.00px;font-size:23.6px;color:#e4543a;letter-spacing:0.682px;font-weight:700;transform:scaleX(1.05);transform-origin:0 0;">40.2%</span>
<span class="t" style="left:2028.79px;top:1338.00px;font-size:24.4px;color:#6c778c;letter-spacing:0.254px;">Was 17.4 Mbps in previous period</span>
<div class="cb" style="left:2682px;top:1164px;background:#4f3fa0"><svg style="left:0;top:0" width="32" height="32" viewBox="0 0 32 32"><path d="M9.3 14.9 L14 20.8 L23 11.2" fill="none" stroke="#fff" stroke-width="2.9" stroke-linecap="round" stroke-linejoin="round"/></svg></div>
<span class="t" style="left:2729.50px;top:1168.00px;font-size:24.4px;color:#6c778c;letter-spacing:0.316px;">Response</span>
<span class="t" style="left:2682.71px;top:1216.00px;font-size:48.7px;color:#0f1e57;letter-spacing:0.395px;font-weight:700;">291</span>
<span class="t" style="left:2775.40px;top:1227.00px;font-size:35.2px;color:#0f1e57;letter-spacing:0.632px;font-weight:700;transform:scaleX(1.06);transform-origin:0 0;">Mbps</span>
<div class="badge" style="left:2682px;top:1284px;width:130px;background:#d5f3e8"></div>
<svg style="left:0;top:0" width="1" height="1"><path d="M2706 1311.6 V1296.8 M2699.4 1303.4 L2706 1296.7 L2712.6 1303.4" fill="none" stroke="#5bc49a" stroke-width="2.6" stroke-linecap="round" stroke-linejoin="round"/></svg>
<span class="t" style="left:2729.44px;top:1293.00px;font-size:23.6px;color:#5bc49a;letter-spacing:-1.250px;font-weight:700;transform:scaleX(1.05);transform-origin:0 0;">11.8%</span>
<span class="t" style="left:2682.79px;top:1338.00px;font-size:24.4px;color:#6c778c;letter-spacing:0.512px;">Was 260 Mbps in previous period</span>
<svg style="left:0;top:0" width="1" height="1"><path d="M2174.9 1406 V1700" stroke="#e7e8f1" stroke-width="2"/><path d="M2188.7 1406 V1700" stroke="#e7e8f1" stroke-width="2"/><path d="M2299.8 1406 V1700" stroke="#e7e8f1" stroke-width="2"/><path d="M2411.0 1406 V1700" stroke="#e7e8f1" stroke-width="2"/><path d="M2522.2 1406 V1700" stroke="#e7e8f1" stroke-width="2"/><path d="M2633.4 1406 V1700" stroke="#e7e8f1" stroke-width="2"/><path d="M2744.6 1406 V1700" stroke="#e7e8f1" stroke-width="2"/><path d="M2855.8 1406 V1700" stroke="#e7e8f1" stroke-width="2"/><path d="M2967.0 1406 V1700" stroke="#e7e8f1" stroke-width="2"/><path d="M3078.2 1406 V1700" stroke="#e7e8f1" stroke-width="2"/><path d="M3189.4 1406 V1700" stroke="#e7e8f1" stroke-width="2"/><path d="M2175 1455.6 H3286.1" stroke="#e7e8f1" stroke-width="2"/><path d="M2175 1513.8 H3286.1" stroke="#e7e8f1" stroke-width="2"/><path d="M2175 1572 H3286.1" stroke="#e7e8f1" stroke-width="2"/><path d="M2175 1630.3 H3286.1" stroke="#e7e8f1" stroke-width="2"/><path d="M2175 1688.4 H3286.1" stroke="#e7e8f1" stroke-width="2"/><path d="M2161.8 1513.8 H2175 M2161.8 1630.3 H2175" stroke="#e7e8f1" stroke-width="2"/><path d="M2175 1746.4 L3286.1 1408.3" stroke="#4f3fa0" stroke-width="4" fill="none"/></svg>
<span class="t" style="left:2080.17px;top:1501.00px;font-size:24.4px;color:#6c778c;letter-spacing:1.831px;">200M</span>
<span class="t" style="left:2082.64px;top:1618.00px;font-size:24.4px;color:#6c778c;letter-spacing:1.008px;">100M</span>
<div class="abs" style="left:2055.9px;top:1691px;width:0;height:0;transform:rotate(-90deg)"><span class="t" style="left:-0.64px;top:-24.04px;font-size:28.4px;color:#6c778c;letter-spacing:0.836px;">Throughput (bps)</span></div>
<div class="abs" style="left:3338.2px;top:1273.4px;width:60px;height:177px;background:#5570f5;border-radius:9px;box-shadow:0 0 48px rgba(90,100,150,0.2),0 0 0 1.2px #e2e5f5"><div class="abs" style="left:8px;top:0;width:60px;height:177px;background:#fff;border-radius:5px"></div></div>
<svg style="left:0;top:0" width="1" height="1"><circle cx="3378" cy="1318" r="14.2" fill="none" stroke="#5570f5" stroke-width="2.9"/></svg>
<span class="t" style="left:3372.28px;top:1308.00px;font-size:20px;color:#5570f5;font-weight:700;">?</span>
<div class="abs" style="left:3389px;top:1427.2px;width:0;height:0;transform:rotate(-90deg)"><span class="t" style="left:-2.58px;top:-26.66px;font-size:31.5px;color:#3a3a3c;letter-spacing:1.708px;">Help</span></div>
<div class="abs" style="left:522px;top:1692px;width:2858px;height:18px;background:#f7f8fa"></div>
<div class="abs" style="left:0;top:1650px;width:3380px;height:60px;background:linear-gradient(rgba(30,30,50,0),rgba(30,30,50,0.012) 40%,rgba(30,30,50,0.03) 70%,rgba(30,30,50,0.05))"></div>
<span class="t" style="left:15.15px;top:1673.00px;font-size:23.2px;color:#6c778c;letter-spacing:1.117px;">Advanced nav options visible</span>
<svg style="left:344.8px;top:1663.6px" width="40" height="40" viewBox="-20 -20 40 40"><circle r="10.4" fill="none" stroke="#9da5bb" stroke-width="3"/><circle cx="0.1" cy="-5.5" r="2.05" fill="#9da5bb"/><path d="M-1.5 -0.6 H0.8 V5.7 M-1.85 5.7 H1.85" fill="none" stroke="#9da5bb" stroke-width="2.5" stroke-linecap="round" stroke-linejoin="round"/></svg>
<span class="t" style="left:398.50px;top:1673.00px;font-size:23.2px;color:#5570f5;letter-spacing:1.607px;">Hide</span>
</div><script>(function(){var r=document.getElementById("root"),s=window.innerWidth/3380;if(s>0&&Math.abs(s-1)>0.002){r.style.transformOrigin="0 0";r.style.transform="scale("+s+")";document.body.style.width=window.innerWidth+"px";document.body.style.height=Math.round(1710*s)+"px";}})();</script></body></html>
